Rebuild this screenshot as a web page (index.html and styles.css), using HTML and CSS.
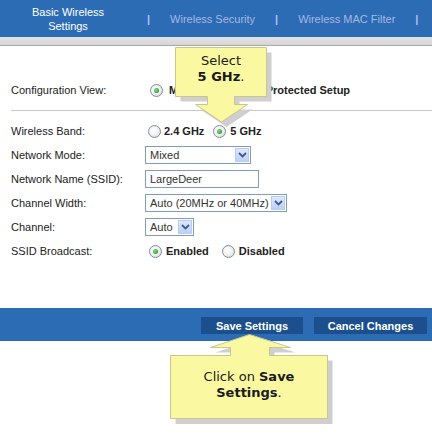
FILE: index.html
```html
<!DOCTYPE html>
<html>
<head>
<meta charset="utf-8">
<link rel="stylesheet" href="styles.css">
</head>
<body>
<div class="page">
  <header class="topnav">
    <div class="tab tab-active">Basic Wireless<br>Settings</div>
    <span class="sep">|</span>
    <div class="tab">Wireless Security</div>
    <span class="sep">|</span>
    <div class="tab">Wireless MAC Filter</div>
    <span class="sep">|</span>
  </header>
  <div class="band"></div>

  <main class="content">
    <div class="row row-config">
      <div class="label">Configuration View:</div>
      <div class="ctrl">
        <span class="radio radio-on r-config"></span><span class="opt">Manual</span>
        <span class="radio r-wps"></span><span class="opt">Wi-Fi Protected Setup</span>
      </div>
    </div>
    <div class="divider"></div>

    <div class="row">
      <div class="label">Wireless Band:</div>
      <div class="ctrl">
        <span class="radio r-band1"></span><span class="opt">2.4 GHz</span>
        <span class="radio radio-on r-band2"></span><span class="opt">5 GHz</span>
      </div>
    </div>
    <div class="row">
      <div class="label">Network Mode:</div>
      <div class="ctrl">
        <div class="select sel-mode"><span class="val">Mixed</span><span class="drop"><svg width="9" height="6" viewBox="0 0 9 6"><path d="M1 1 L4.5 4.5 L8 1" fill="none" stroke="#3f5a8a" stroke-width="1.8"/></svg></span></div>
      </div>
    </div>
    <div class="row">
      <div class="label">Network Name (SSID):</div>
      <div class="ctrl">
        <div class="input">LargeDeer</div>
      </div>
    </div>
    <div class="row">
      <div class="label">Channel Width:</div>
      <div class="ctrl">
        <div class="select sel-cw"><span class="val">Auto (20MHz or 40MHz)</span><span class="drop"><svg width="9" height="6" viewBox="0 0 9 6"><path d="M1 1 L4.5 4.5 L8 1" fill="none" stroke="#3f5a8a" stroke-width="1.8"/></svg></span></div>
      </div>
    </div>
    <div class="row">
      <div class="label">Channel:</div>
      <div class="ctrl">
        <div class="select sel-ch"><span class="val">Auto</span><span class="drop"><svg width="9" height="6" viewBox="0 0 9 6"><path d="M1 1 L4.5 4.5 L8 1" fill="none" stroke="#3f5a8a" stroke-width="1.8"/></svg></span></div>
      </div>
    </div>
    <div class="row">
      <div class="label">SSID Broadcast:</div>
      <div class="ctrl">
        <span class="radio radio-on r-en"></span><span class="opt">Enabled</span>
        <span class="radio r-dis"></span><span class="opt">Disabled</span>
      </div>
    </div>
  </main>

  <footer class="actions">
    <div class="btn btn-save">Save Settings</div>
    <div class="btn btn-cancel">Cancel Changes</div>
  </footer>

  <div class="callout callout-top">
    <svg class="callout-shape" width="100" height="82" viewBox="0 0 100 82">
      <polygon points="5.5,5.5 96.5,5.5 96.5,54.5 64.5,54.5 64.5,62.5 77.5,62.5 51.5,80 25.5,62.5 37.5,62.5 37.5,54.5 5.5,54.5" fill="#cfcfcf"/>
      <polygon points="0.5,0.5 91.5,0.5 91.5,49.5 59.5,49.5 59.5,57.5 72.5,57.5 46.5,75 20.5,57.5 32.5,57.5 32.5,49.5 0.5,49.5" fill="#fbf8a2" stroke="#c9c68e"/>
    </svg>
    <div class="callout-text ct-top">Select<br><b>5 GHz</b>.</div>
  </div>

  <div class="callout callout-bottom">
    <svg class="callout-shape" width="164" height="92" viewBox="0 0 164 92">
      <polygon points="84.5,5.5 125.5,18.5 104.5,18.5 104.5,26.5 162.5,26.5 162.5,90 5.5,90 5.5,26.5 65.5,26.5 65.5,18.5 45.5,18.5" fill="#cfcfcf"/>
      <polygon points="79.5,0.5 120.5,13.5 99.5,13.5 99.5,21.5 157.5,21.5 157.5,84.5 0.5,84.5 0.5,21.5 60.5,21.5 60.5,13.5 40.5,13.5" fill="#fbf8a2" stroke="#c9c68e"/>
    </svg>
    <div class="callout-text ct-bottom">Click on <b>Save</b><br><b>Settings</b>.</div>
  </div>
</div>
</body>
</html>
```

FILE: styles.css
```css
html, body {
  margin: 0;
  padding: 0;
  background: #ffffff;
}

.page {
  position: relative;
  width: 432px;
  height: 441px;
  overflow: hidden;
  font-family: "Liberation Sans", Arial, sans-serif;
  font-size: 11px;
  color: #222222;
}

/* top navigation */
.topnav {
  height: 37px;
  background: #2c6cb4;
  display: flex;
  align-items: center;
  gap: 20px;
}

.tab {
  color: #a9b6e4;
  line-height: 14px;
  white-space: nowrap;
}

.tab-active {
  color: #ffffff;
  width: 118px;
  margin-left: 9px;
  text-align: center;
}

.sep {
  color: #b3bfee;
  font-weight: bold;
}

.band {
  height: 8px;
  background: linear-gradient(#e2e2e2, #d6d6d6);
  border-bottom: 1px solid #a8a8a8;
}

/* content */
.content {
  padding-left: 11px;
  display: flex;
  flex-direction: column;
}

.row {
  height: 24px;
  display: flex;
  align-items: center;
}

.row-config {
  margin-top: 32px;
}

.divider {
  height: 1px;
  background: #c6c6d8;
  margin-top: 8px;
  margin-bottom: 8px;
}

.label {
  width: 134px;
  flex: none;
}

.ctrl {
  display: flex;
  align-items: center;
}

.opt {
  font-weight: bold;
  color: #222222;
}

.radio {
  width: 11px;
  height: 11px;
  border: 1px solid #7d8e9e;
  border-radius: 50%;
  background: radial-gradient(circle at 40% 40%, #ffffff 0%, #f2f2f2 45%, #d2d2d2 100%);
  display: flex;
  align-items: center;
  justify-content: center;
  margin-right: 4px;
  flex: none;
}

.radio-on::after {
  content: "";
  width: 5px;
  height: 5px;
  border-radius: 50%;
  background: radial-gradient(circle at 40% 40%, #8fe08f 0%, #3aa83a 60%, #2a8a2a 100%);
}

.r-config { margin-left: 5px; margin-right: 6px; }
.r-wps { margin-left: 12px; }
.r-band1 { margin-left: 3px; margin-right: 3px; }
.r-band2 { margin-left: 9px; }
.r-en { margin-left: 4px; margin-right: 4px; }
.r-dis { margin-left: 13px; }

/* select & input */
.select, .input {
  box-sizing: border-box;
  height: 18px;
  border: 1px solid #7f9db9;
  background: #ffffff;
  display: flex;
  align-items: center;
  color: #333333;
}

.val {
  flex: 1;
  padding-left: 4px;
  white-space: nowrap;
}

.drop {
  width: 14px;
  height: 14px;
  margin-right: 1px;
  box-sizing: border-box;
  border: 1px solid #b9cbf3;
  background: linear-gradient(#dfe8fd, #bcd0f8);
  display: flex;
  align-items: center;
  justify-content: center;
}

.sel-mode { width: 106px; }
.sel-cw { width: 142px; }
.sel-ch { width: 49px; }

.input {
  width: 114px;
  padding-left: 4px;
}

/* bottom action bar */
.actions {
  margin-top: 45px;
  height: 33px;
  background: #2c6cb4;
  display: flex;
  justify-content: flex-end;
  align-items: flex-start;
  padding-top: 9px;
  padding-right: 5px;
  box-sizing: border-box;
  gap: 11px;
}

.btn {
  height: 17px;
  background: #1c4f8d;
  color: #ffffff;
  font-weight: bold;
  display: flex;
  align-items: center;
  justify-content: center;
}

.btn-save { width: 102px; }
.btn-cancel { width: 113px; }

/* callouts */
.callout {
  position: absolute;
}

.callout-top {
  left: 175px;
  top: 47px;
  width: 100px;
  height: 82px;
}

.callout-bottom {
  left: 170px;
  top: 334px;
  width: 164px;
  height: 92px;
}

.callout-shape {
  position: absolute;
  left: 0;
  top: 0;
}

.callout-text {
  position: absolute;
  font-family: "DejaVu Sans", Verdana, sans-serif;
  font-size: 13px;
  line-height: 16px;
  color: #1a1a1a;
  text-align: center;
}

.ct-top {
  left: 0;
  top: 6px;
  width: 92px;
}

.ct-bottom {
  left: 0;
  top: 35px;
  width: 158px;
}
```
